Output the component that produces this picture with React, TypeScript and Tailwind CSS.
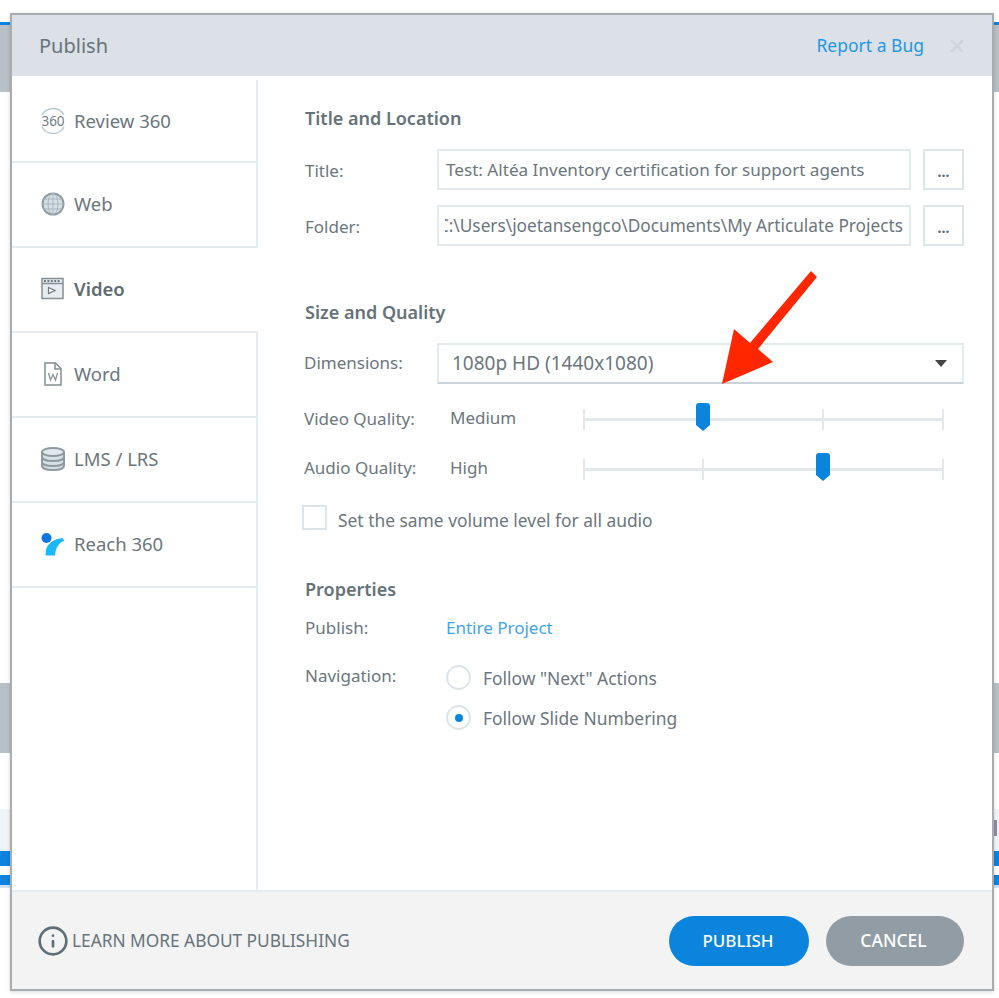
import { Info, X } from 'lucide-react'
import type { ReactNode } from 'react'

const FONT = 'font-["Noto_Sans","Open_Sans",sans-serif]'

function Review360Icon() {
  return (
    <svg width="28" height="28" viewBox="0 0 28 28" className="shrink-0">
      <path d="M3 8 A12.5 12.5 0 0 1 25 8" fill="none" stroke="#b9c9d2" strokeWidth="1.5" />
      <path d="M3 20 A12.5 12.5 0 0 0 25 20" fill="none" stroke="#b9c9d2" strokeWidth="1.5" />
      <text x="14" y="19" textAnchor="middle" fontSize="13.5" fill="#6f7c82" fontFamily="Noto Sans">360</text>
    </svg>
  )
}

function WebIcon() {
  return (
    <svg width="28" height="28" viewBox="0 0 28 28" className="shrink-0">
      <circle cx="14" cy="14" r="10.5" fill="#d5e0e6" stroke="#8f9a9f" strokeWidth="2" />
      <ellipse cx="14" cy="14" rx="5" ry="10.5" fill="none" stroke="#a9b6bc" strokeWidth="1" />
      <path d="M14 3.5V24.5M3.5 14H24.5M5 9H23M5 19H23" stroke="#a9b6bc" strokeWidth="1" />
    </svg>
  )
}

function VideoIcon() {
  return (
    <svg width="28" height="28" viewBox="0 0 28 28" className="shrink-0">
      <rect x="3" y="3.5" width="21" height="20" fill="#e6ecef" stroke="#858f94" strokeWidth="1.5" />
      <path d="M3 8.5H24" stroke="#858f94" strokeWidth="1.5" />
      <path d="M5 6H22" stroke="#6f7a80" strokeWidth="2" strokeDasharray="2 1.4" />
      <path d="M9.5 12.5L16 15.5L9.5 18.5Z" fill="#fff" stroke="#6f7a80" strokeWidth="1.2" />
    </svg>
  )
}

function WordIcon() {
  return (
    <svg width="28" height="28" viewBox="0 0 28 28" className="shrink-0">
      <path d="M6 3H16.5L22 8.5V25H6Z" fill="#fff" stroke="#858f94" strokeWidth="1.5" />
      <path d="M16 3V9H22" fill="none" stroke="#858f94" strokeWidth="1.5" />
      <path d="M9.5 13L11.5 20L14 14.5L16.5 20L18.5 13" fill="none" stroke="#8b969b" strokeWidth="1.3" />
    </svg>
  )
}

function LmsIcon() {
  return (
    <svg width="28" height="28" viewBox="0 0 28 28" className="shrink-0">
      <path d="M3 7V21C3 23.5 8 25 14 25S25 23.5 25 21V7Z" fill="#d5e0e6" stroke="#8f9a9f" strokeWidth="2" />
      <ellipse cx="14" cy="7" rx="11" ry="4" fill="#dfe8ec" stroke="#8f9a9f" strokeWidth="2" />
      <path d="M3 12C3 14.5 8 16 14 16S25 14.5 25 12M3 17C3 19.5 8 21 14 21S25 19.5 25 17" fill="none" stroke="#8f9a9f" strokeWidth="2" />
    </svg>
  )
}

function ReachIcon() {
  return (
    <svg width="28" height="28" viewBox="0 0 28 28" className="shrink-0">
      <path d="M6.5 25.5L7 20C8 14 15 8.5 24 8L25 11C20 12.5 16.5 18 16 25.5Z" fill="#1ab8f5" />
      <circle cx="7.5" cy="8" r="5" fill="#0a78de" />
    </svg>
  )
}

const navItems = [
  { label: 'Review 360', icon: <Review360Icon />, first: true },
  { label: 'Web', icon: <WebIcon /> },
  { label: 'Video', icon: <VideoIcon />, active: true },
  { label: 'Word', icon: <WordIcon /> },
  { label: 'LMS / LRS', icon: <LmsIcon /> },
  { label: 'Reach 360', icon: <ReachIcon /> },
]

function Slider({ ticks, thumb }: { ticks: number[]; thumb: number }) {
  return (
    <div className="relative top-[1px] h-[20px] w-[361px]">
      <div className="absolute left-0 right-0 top-[9px] h-[3px] bg-[#e2e8ec]" />
      {ticks.map((t) => (
        <div key={t} className="absolute top-0 h-[21px] w-[2px] bg-[#e2e8ec]" style={{ left: t }} />
      ))}
      <svg width="14" height="28" viewBox="0 0 14 28" className="absolute top-[-6px]" style={{ left: thumb - 7 }}>
        <path d="M3 0H11Q14 0 14 3V22L7 28L0 22V3Q0 0 3 0Z" fill="#0a84dd" />
      </svg>
    </div>
  )
}

function Field({ label, value, dir }: { label: string; value: string; dir?: boolean }) {
  return (
    <div className="flex items-center">
      <span className="w-[132px] pt-[3px] text-[17px]">{label}</span>
      <div className={`flex h-[41px] w-[474px] items-center border-2 border-[#e3e9ed] px-[6px] ${dir ? 'text-[17.25px]' : 'text-[17.12px]'}`}>
        <div className={`flex min-w-0 flex-1 overflow-hidden ${dir ? 'justify-end' : 'pl-[1px]'}`}>
          <span className="shrink-0 whitespace-nowrap">{value}</span>
        </div>
      </div>
      <button className="ml-[12px] flex h-[41px] w-[41px] items-center justify-center border-2 border-[#dfe6ea] pt-1 text-[14px] font-bold text-[#5f6b73]">
        ...
      </button>
    </div>
  )
}

function Heading({ children, className }: { children: ReactNode; className?: string }) {
  return <h3 className={`text-[18px] font-semibold leading-6 text-[#66727a] ${className ?? ''}`}>{children}</h3>
}

export default function App() {
  return (
    <div className={`relative h-[998px] w-[999px] overflow-hidden bg-white text-[#6b767d] ${FONT}`}>
      {/* What shows behind the dialog */}
      <div className="absolute left-0 right-0 top-[22px] h-[3px] bg-[#0a84dd]" />
      <div className="absolute left-0 top-[25px] h-[67px] w-full bg-[#b8c1c7]" />
      <div className="absolute left-0 top-[683px] h-[70px] w-full bg-[#b8c1c7]" />
      <div className="absolute left-0 top-[809px] h-[42px] w-full bg-[#f0f4f7]" />
      <div className="absolute left-0 top-[851px] h-[34px] w-full bg-[#0a84dd]" />
      <div className="absolute left-0 top-[866px] h-[9px] w-full bg-white" />
      <div className="absolute left-0 top-[885px] h-[3px] w-full bg-[#cfe3f2]" />
      <div className="absolute left-[994px] top-[820px] h-[16px] w-[3px] bg-[#9a86a8]" />

      {/* Dialog */}
      <div className="absolute left-[10px] top-[13px] flex h-[978px] w-[984px] flex-col border-2 border-[#a8acae] bg-white shadow-[0_1px_4px_rgba(0,0,0,0.15)]">
        <header className="flex h-[61px] shrink-0 items-center justify-between bg-[#dbe1e6] pl-[27px] pr-[25px]">
          <span className="text-[20px] text-[#67747c]">Publish</span>
          <div className="flex items-center gap-[23px]">
            <a className="text-[17.5px] text-[#1f97e8]">Report a Bug</a>
            <X size={20} strokeWidth={3} className="text-[#cfd5d9]" />
          </div>
        </header>

        <div className="flex min-h-0 flex-1">
          <nav className="mt-[4px] flex w-[246px] shrink-0 flex-col border-r-2 border-[#e6ebef]">
            {navItems.map((item) => (
              <div
                key={item.label}
                className={`flex items-center gap-[7px] border-b-2 border-[#e6ebef] pl-[27px] text-[18.5px] ${item.first ? 'h-[83px]' : 'h-[85px] pb-[1px]'} ${item.active ? 'mr-[-2px] bg-white font-semibold text-[#5f6b73]' : ''}`}
              >
                {item.icon}
                <span>{item.label}</span>
              </div>
            ))}
          </nav>

          <main className="relative flex-1 pl-[47px]">
            <Heading className="mt-[30px]">Title and Location</Heading>
            <div className="mt-[19px] flex flex-col gap-[15px]">
              <Field label="Title:" value="Test: Altéa Inventory certification for support agents" />
              <Field label="Folder:" value="C:\Users\joetansengco\Documents\My Articulate Projects" dir />
            </div>

            <Heading className="mt-[54px]">Size and Quality</Heading>
            <div className="mt-[19px] flex items-center">
              <span className="ml-[-1px] mt-[-2px] w-[133px] text-[17px]">Dimensions:</span>
              <div className="flex h-[41px] w-[527px] items-center justify-between border-2 border-[#e3e9ed] border-b-[#c9d2d8] pl-[13px] pr-[15px] text-[19px]">
                <span>1080p HD (1440x1080)</span>
                <svg width="12" height="8" viewBox="0 0 12 8">
                  <path d="M0 0H12L6 7Z" fill="#444" />
                </svg>
              </div>
            </div>

            <div className="mt-[24px] flex h-[20px] items-center">
              <span className="ml-[-1px] w-[146px] pt-[1px] text-[17px]">Video Quality:</span>
              <span className="w-[133px] text-[17px]">Medium</span>
              <Slider ticks={[0, 239, 359]} thumb={120} />
            </div>
            <div className="mt-[30px] flex h-[20px] items-center">
              <span className="ml-[-1px] w-[146px] text-[17px]">Audio Quality:</span>
              <span className="w-[133px] text-[17px]">High</span>
              <Slider ticks={[0, 119, 359]} thumb={240} />
            </div>

            <label className="ml-[-3px] mt-[27px] flex items-start gap-[11px] text-[17.4px]">
              <span className="h-[25px] w-[25px] border-2 border-[#dde4e9]" />
              <span className="pt-[2px]">Set the same volume level for all audio</span>
            </label>

            <Heading className="mt-[44px]">Properties</Heading>
            <div className="mt-[14px] flex items-center text-[17px]">
              <span className="w-[141px]">Publish:</span>
              <a className="text-[#3fa5ec]">Entire Project</a>
            </div>
            <div className="mt-[22px] flex">
              <span className="w-[141px] text-[17px]">Navigation:</span>
              <div className="flex flex-col gap-[14px] pt-[2px] text-[17.4px]">
                <div className="flex items-center gap-[12px]">
                  <span className="h-[25px] w-[25px] rounded-full border-2 border-[#dde4e9]" />
                  Follow "Next" Actions
                </div>
                <div className="flex items-center gap-[12px]">
                  <span className="flex h-[25px] w-[25px] items-center justify-center rounded-full border-2 border-[#dde4e9]">
                    <span className="h-[8px] w-[8px] rounded-full bg-[#0a84dd]" />
                  </span>
                  Follow Slide Numbering
                </div>
              </div>
            </div>
          </main>
        </div>

        <footer className="flex h-[99px] shrink-0 items-center justify-between border-t-2 border-[#e6ebef] bg-[#f3f3f3] pl-[27px] pr-[28px]">
          <div className="flex items-center gap-[4px] text-[17.3px] text-[#67747c]">
            <Info size={32} strokeWidth={2} className="ml-[-2px] text-[#5f6f78]" />
            <span className="ml-[-1px]">LEARN MORE ABOUT PUBLISHING</span>
          </div>
          <div className="flex gap-[17px]">
            <button className="h-[50px] w-[140px] rounded-full bg-[#0a84dd] pr-[2px] text-[17px] font-medium text-white">PUBLISH</button>
            <button className="h-[50px] w-[138px] rounded-full bg-[#919ca4] pr-[3px] text-[17.5px] font-medium text-white">CANCEL</button>
          </div>
        </footer>
      </div>

      {/* Red annotation arrow */}
      <svg width="999" height="998" viewBox="0 0 999 998" className="pointer-events-none absolute left-0 top-0">
        <path d="M722 384L734 329L750 343L811 271L817 277L758 349L773 362Z" fill="#ff2600" />
      </svg>
    </div>
  )
}
